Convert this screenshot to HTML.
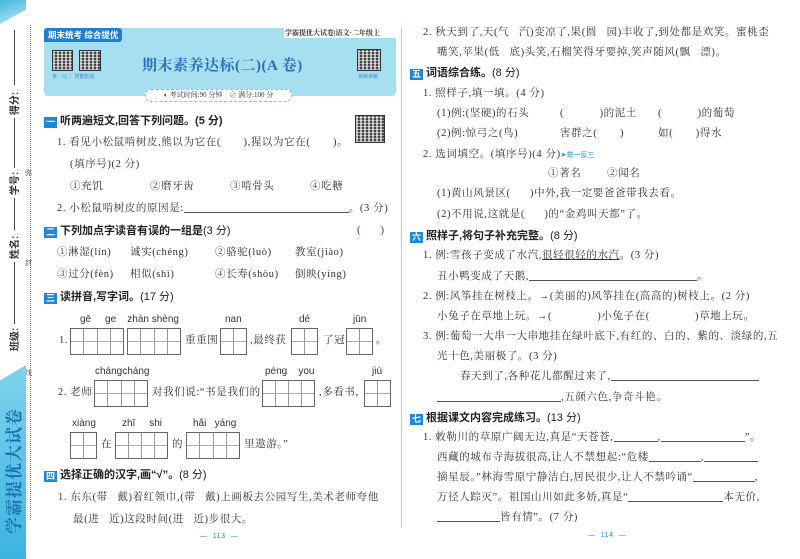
<!DOCTYPE html>
<html><head><meta charset="utf-8"><style>
*{margin:0;padding:0;box-sizing:border-box}
body{width:800px;height:559px;background:#fff;position:relative;overflow:hidden;font-family:"Liberation Serif","Noto Serif CJK SC",serif;color:#333}
.t{position:absolute;white-space:nowrap;font-size:10.5px;letter-spacing:0.6px;line-height:14px}
.h{position:absolute;white-space:nowrap;font-size:11px;font-weight:bold;font-family:"Liberation Sans","Noto Sans CJK SC",sans-serif;color:#222;line-height:14px}
.ic{display:inline-block;width:13px;height:11px;background:#1e88d6;color:#fff;font-size:9px;text-align:center;line-height:11px;margin-right:3px;vertical-align:-1px}
.py{position:absolute;font-family:"Liberation Sans",sans-serif;font-size:10px;color:#333;white-space:nowrap}
.bx{position:absolute;height:27px;border:1px solid #666;background:
linear-gradient(#aaa,#aaa) center/100% 1px no-repeat;display:flex}
.bx i{flex:1;border-right:1px solid #999;height:100%}
.bx i:last-child{border-right:none}
.ln{display:inline-block;border-bottom:1px solid #555;vertical-align:-2px}
.qr{position:absolute;background:
repeating-linear-gradient(90deg,rgba(255,255,255,.6) 0 2px,transparent 2px 4px),
repeating-linear-gradient(0deg,rgba(255,255,255,.5) 0 1px,transparent 1px 3px),#444;border:1px solid #333}
.lab{position:absolute;transform:rotate(-90deg);font-size:10px;font-weight:bold;font-family:"Liberation Sans","Noto Sans CJK SC",sans-serif;white-space:nowrap}
.vl{position:absolute;left:14px;width:1px;background:#444}
</style></head><body>
<div style="position:absolute;left:0;top:0;width:26px;height:24px;background:linear-gradient(160deg,#3db8dc,#bfe9f5);clip-path:polygon(0 0,100% 0,100% 40%,0 100%)"></div>
<div style="position:absolute;left:30px;top:25px;height:495px;border-left:1px dotted #888"></div>
<div class="t" style="left:25px;top:166px;font-size:7px">弥</div>
<div class="t" style="left:25px;top:256px;font-size:7px">封</div>
<div class="t" style="left:25px;top:366px;font-size:7px">线</div>
<div class="vl" style="top:30px;height:55px"></div>
<div class="lab" style="left:2px;top:96px">得分:</div>
<div class="vl" style="top:118px;height:50px"></div>
<div class="lab" style="left:2px;top:176px">学号:</div>
<div class="vl" style="top:198px;height:32px"></div>
<div class="lab" style="left:2px;top:240px">姓名:</div>
<div class="vl" style="top:262px;height:62px"></div>
<div class="lab" style="left:2px;top:332px">班级:</div>
<div style="position:absolute;left:0;top:365px;width:26px;height:194px;background:linear-gradient(#7fd3ec,#3bb5e0);clip-path:polygon(0 8%,100% 0,100% 100%,0 100%)"></div>
<div style="position:absolute;left:-57px;top:461px;width:140px;height:20px;line-height:20px;text-align:center;transform:rotate(-90deg);font-size:17px;font-weight:bold;color:#1a6fb3;font-family:'Noto Serif CJK SC',serif;letter-spacing:1px;white-space:nowrap">学霸提优大试卷</div>

<div style="position:absolute;left:44px;top:28px;width:352px;height:68px;background:#a6dff0;border-radius:4px"></div>
<div style="position:absolute;left:44px;top:28px;width:78px;height:14px;background:#1e7fd0;color:#fff;font-size:8.5px;font-weight:bold;font-family:'Liberation Sans','Noto Sans CJK SC',sans-serif;padding-left:4px;line-height:14px;border-radius:3px 3px 3px 0">期末统考 综合提优</div>
<div style="position:absolute;left:284px;top:28px;width:116px;height:10px;background:#fff"></div>
<div class="t" style="left:285px;top:28px;font-size:7px;letter-spacing:0;font-weight:bold;line-height:10px">学霸提优大试卷|语文·二年级上</div>
<div class="qr" style="left:52px;top:50px;width:21px;height:21px"></div>
<div class="qr" style="left:79px;top:50px;width:22px;height:21px"></div>
<div class="qr" style="left:357px;top:49px;width:24px;height:22px"></div>
<div class="t" style="left:52px;top:74px;font-size:5px;color:#2a6db5;letter-spacing:0;line-height:7px">单一元二&nbsp;&nbsp;智能批改</div>
<div class="t" style="left:358px;top:74px;font-size:5px;color:#2a6db5;letter-spacing:0;line-height:7px">视频讲解</div>
<div class="t" style="left:142px;top:56px;font-size:15px;font-weight:bold;color:#2a6db5;letter-spacing:0.5px;line-height:20px">期末素养达标(二)(A 卷)</div>
<div style="position:absolute;left:145px;top:89px;width:147px;height:13px;background:#fff;border:1px dashed #7bc8e6;border-radius:6px;font-size:7px;line-height:11px;text-align:center;white-space:nowrap">◐ 考试时间:90 分钟 &nbsp;&nbsp; ⊘ 满分:100 分</div>

<div class="h" style="left:44px;top:114px"><span class="ic">一</span>听两遍短文,回答下列问题。(5 分)</div>
<div class="qr" style="left:355px;top:115px;width:30px;height:28px"></div>
<div class="t" style="left:57px;top:136px">1. 看见小松鼠啃树皮,熊以为它在(&nbsp;&nbsp;&nbsp;&nbsp;&nbsp;&nbsp;&nbsp;),猩以为它在(&nbsp;&nbsp;&nbsp;&nbsp;&nbsp;&nbsp;&nbsp;)。</div>
<div class="t" style="left:70px;top:158px">(填序号)(2 分)</div>
<div class="t" style="left:70px;top:180px">①充饥</div>
<div class="t" style="left:150px;top:180px">②磨牙齿</div>
<div class="t" style="left:230px;top:180px">③啃骨头</div>
<div class="t" style="left:310px;top:180px">④吃糖</div>
<div class="t" style="left:57px;top:202px">2. 小松鼠啃树皮的原因是:<span class="ln" style="width:165px"></span>。(3 分)</div>
<div class="h" style="left:44px;top:224px"><span class="ic">二</span>下列加点字读音有误的一组是<span style="font-weight:normal">(3 分)</span></div>
<div class="t" style="left:357px;top:224px">(&nbsp;&nbsp;&nbsp;&nbsp;&nbsp;&nbsp;)</div>
<div class="t" style="left:57px;top:246px">①淋湿(lín)</div>
<div class="t" style="left:130px;top:246px">诚实(chéng)</div>
<div class="t" style="left:215px;top:246px">②骆驼(luò)</div>
<div class="t" style="left:295px;top:246px">教室(jiào)</div>
<div class="t" style="left:57px;top:268px">③过分(fèn)</div>
<div class="t" style="left:130px;top:268px">相似(shì)</div>
<div class="t" style="left:215px;top:268px">④长寿(shòu)</div>
<div class="t" style="left:295px;top:268px">倒映(yìng)</div>

<div class="h" style="left:44px;top:290px"><span class="ic">三</span>读拼音,写字词。<span style="font-weight:normal">(17 分)</span></div>
<div class="py" style="left:80px;top:314px">gē&nbsp;&nbsp;&nbsp;&nbsp;&nbsp;ge&nbsp;&nbsp;&nbsp;&nbsp;zhàn shèng</div>
<div class="py" style="left:225px;top:314px">nan</div>
<div class="py" style="left:299px;top:314px">dé</div>
<div class="py" style="left:353px;top:314px">jūn</div>
<div class="t" style="left:59px;top:334px">1.</div>
<div class="bx" style="left:70px;top:328px;width:54px"><i></i><i></i><i></i><i></i></div>
<div class="bx" style="left:127px;top:328px;width:54px"><i></i><i></i><i></i><i></i></div>
<div class="t" style="left:185px;top:334px">重重围</div>
<div class="bx" style="left:220px;top:328px;width:27px"><i></i><i></i></div>
<div class="t" style="left:250px;top:334px">,最终获</div>
<div class="bx" style="left:291px;top:328px;width:27px"><i></i><i></i></div>
<div class="t" style="left:323px;top:334px">了冠</div>
<div class="bx" style="left:346px;top:328px;width:27px"><i></i><i></i></div>
<div class="t" style="left:376px;top:334px">。</div>

<div class="py" style="left:95px;top:366px">chángcháng</div>
<div class="py" style="left:265px;top:366px">péng&nbsp;&nbsp;&nbsp;&nbsp;you</div>
<div class="py" style="left:372px;top:366px">jiù</div>
<div class="t" style="left:58px;top:386px">2. 老师</div>
<div class="bx" style="left:94px;top:380px;width:54px"><i></i><i></i><i></i><i></i></div>
<div class="t" style="left:152px;top:386px">对我们说:“书是我们的</div>
<div class="bx" style="left:262px;top:380px;width:53px"><i></i><i></i><i></i><i></i></div>
<div class="t" style="left:319px;top:386px">,多看书,</div>
<div class="bx" style="left:364px;top:380px;width:27px"><i></i><i></i></div>

<div class="py" style="left:72px;top:418px">xiàng</div>
<div class="py" style="left:122px;top:418px">zhī&nbsp;&nbsp;&nbsp;&nbsp;&nbsp;shi</div>
<div class="py" style="left:193px;top:418px">hǎi&nbsp;&nbsp;&nbsp;yáng</div>
<div class="bx" style="left:70px;top:432px;width:27px"><i></i><i></i></div>
<div class="t" style="left:101px;top:438px">在</div>
<div class="bx" style="left:115px;top:432px;width:53px"><i></i><i></i><i></i><i></i></div>
<div class="t" style="left:172px;top:438px">的</div>
<div class="bx" style="left:186px;top:432px;width:54px"><i></i><i></i><i></i><i></i></div>
<div class="t" style="left:244px;top:438px">里遨游。”</div>

<div class="h" style="left:44px;top:468px"><span class="ic">四</span>选择正确的汉字,画“√”。<span style="font-weight:normal">(8 分)</span></div>
<div class="t" style="left:58px;top:491px">1. 东东(带&nbsp;&nbsp;&nbsp;戴)着红领巾,(带&nbsp;&nbsp;&nbsp;戴)上画板去公园写生,美术老师夸他</div>
<div class="t" style="left:73px;top:513px">最(进&nbsp;&nbsp;&nbsp;近)这段时间(进&nbsp;&nbsp;&nbsp;近)步很大。</div>
<div class="t" style="left:200px;top:530px;font-size:7px;color:#1e88d6;font-family:'Liberation Sans',sans-serif">—&nbsp;&nbsp;113&nbsp;&nbsp;—</div>

<div style="position:absolute;left:401px;top:28px;height:500px;border-left:1px solid #9ad3ea"></div>
<div class="t" style="left:423px;top:26px">2. 秋天到了,天(气&nbsp;&nbsp;&nbsp;汽)变凉了,果(圆&nbsp;&nbsp;&nbsp;园)丰收了,到处都是欢笑。蜜桃歪</div>
<div class="t" style="left:437px;top:46px">嘴笑,苹果(低&nbsp;&nbsp;&nbsp;底)头笑,石榴笑得牙要掉,笑声随风(飘&nbsp;&nbsp;&nbsp;漂)。</div>
<div class="h" style="left:410px;top:66px"><span class="ic">五</span>词语综合练。<span style="font-weight:normal">(8 分)</span></div>
<div class="t" style="left:423px;top:87px">1. 照样子,填一填。(4 分)</div>
<div class="t" style="left:437px;top:107px">(1)例:(坚硬)的石头</div>
<div class="t" style="left:560px;top:107px">(&nbsp;&nbsp;&nbsp;&nbsp;&nbsp;&nbsp;&nbsp;&nbsp;&nbsp;&nbsp;&nbsp;)的泥土</div>
<div class="t" style="left:658px;top:107px">(&nbsp;&nbsp;&nbsp;&nbsp;&nbsp;&nbsp;&nbsp;&nbsp;&nbsp;&nbsp;&nbsp;)的葡萄</div>
<div class="t" style="left:437px;top:127px">(2)例:惊弓之(鸟)</div>
<div class="t" style="left:560px;top:127px">害群之(&nbsp;&nbsp;&nbsp;&nbsp;&nbsp;&nbsp;&nbsp;)</div>
<div class="t" style="left:658px;top:127px">如(&nbsp;&nbsp;&nbsp;&nbsp;&nbsp;&nbsp;&nbsp;)得水</div>
<div class="t" style="left:423px;top:148px">2. 选词填空。(填序号)(4 分)<span style="color:#1e88d6;font-size:7px;font-family:'Liberation Sans','Noto Sans CJK SC',sans-serif;letter-spacing:0">➤举一反三</span></div>
<div class="t" style="left:548px;top:167px">①著名&nbsp;&nbsp;&nbsp;&nbsp;&nbsp;&nbsp;&nbsp;&nbsp;②闻名</div>
<div class="t" style="left:437px;top:187px">(1)黄山风景区(&nbsp;&nbsp;&nbsp;&nbsp;&nbsp;&nbsp;)中外,我一定要爸爸带我去看。</div>
<div class="t" style="left:437px;top:208px">(2)不用说,这就是(&nbsp;&nbsp;&nbsp;&nbsp;&nbsp;&nbsp;)的“金鸡叫天都”了。</div>
<div class="h" style="left:410px;top:229px"><span class="ic">六</span>照样子,将句子补充完整。<span style="font-weight:normal">(8 分)</span></div>
<div class="t" style="left:423px;top:249px">1. 例:雪孩子变成了水汽,<u>很轻很轻的水汽</u>。(3 分)</div>
<div class="t" style="left:437px;top:270px">丑小鸭变成了天鹅,<span class="ln" style="width:168px"></span>。</div>
<div class="t" style="left:423px;top:290px">2. 例:风筝挂在树枝上。→(美丽的)风筝挂在(高高的)树枝上。(2 分)</div>
<div class="t" style="left:437px;top:310px">小兔子在草地上玩。→(&nbsp;&nbsp;&nbsp;&nbsp;&nbsp;&nbsp;&nbsp;&nbsp;&nbsp;&nbsp;&nbsp;&nbsp;&nbsp;&nbsp;)小兔子在(&nbsp;&nbsp;&nbsp;&nbsp;&nbsp;&nbsp;&nbsp;&nbsp;&nbsp;&nbsp;&nbsp;&nbsp;&nbsp;&nbsp;)草地上玩。</div>
<div class="t" style="left:423px;top:330px">3. 例:葡萄一大串一大串地挂在绿叶底下,有红的、白的、紫的、淡绿的,五</div>
<div class="t" style="left:437px;top:350px">光十色,美丽极了。(3 分)</div>
<div class="t" style="left:460px;top:370px">春天到了,各种花儿都醒过来了,<span class="ln" style="width:148px"></span></div>
<div class="t" style="left:437px;top:391px"><span class="ln" style="width:124px"></span>,五颜六色,争奇斗艳。</div>
<div class="h" style="left:410px;top:411px"><span class="ic">七</span>根据课文内容完成练习。<span style="font-weight:normal">(13 分)</span></div>
<div class="t" style="left:423px;top:431px">1. 敕勒川的草原广阔无边,真是“天苍苍,<span class="ln" style="width:44px"></span>,<span class="ln" style="width:84px"></span>”。</div>
<div class="t" style="left:437px;top:451px">西藏的城布寺海拔很高,让人不禁想起:“危楼<span class="ln" style="width:52px"></span>,<span class="ln" style="width:54px"></span></div>
<div class="t" style="left:437px;top:471px">摘星辰。”林海雪原宁静洁白,居民很少,让人不禁吟诵“<span class="ln" style="width:62px"></span>,</div>
<div class="t" style="left:437px;top:491px">万径人踪灭”。祖国山川如此多娇,真是“<span class="ln" style="width:95px"></span>本无价,</div>
<div class="t" style="left:437px;top:511px"><span class="ln" style="width:63px"></span>皆有情”。(7 分)</div>
<div class="t" style="left:588px;top:529px;font-size:7px;color:#1e88d6;font-family:'Liberation Sans',sans-serif">—&nbsp;&nbsp;114&nbsp;&nbsp;—</div>
</body></html>
